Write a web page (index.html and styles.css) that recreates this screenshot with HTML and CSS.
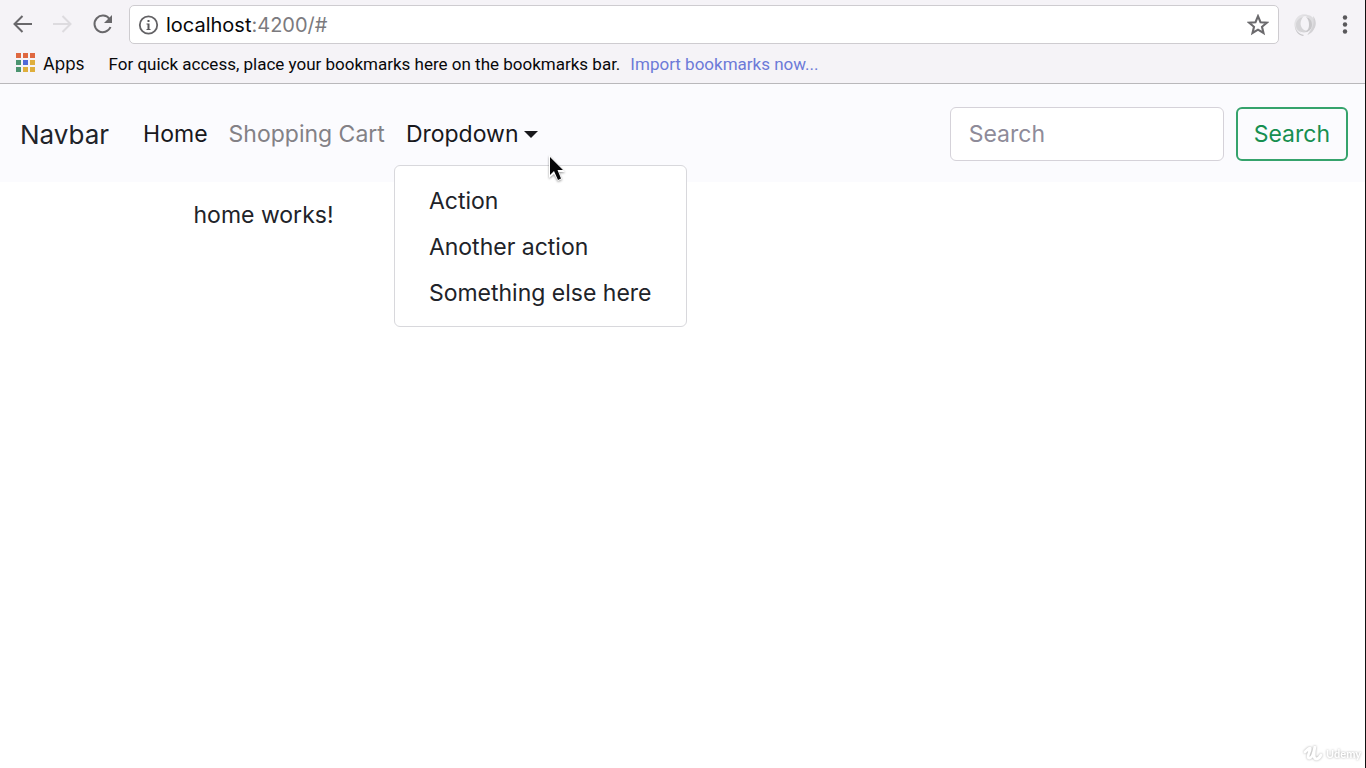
FILE: index.html
```html
<!DOCTYPE html>
<html lang="en">
<head>
<meta charset="utf-8">
<meta name="viewport" content="width=device-width, initial-scale=1">
<title>localhost:4200</title>
<link rel="stylesheet" href="styles.css">
</head>
<body>
<div class="window">
  <header class="chrome">
    <div class="toolbar">
      <button class="icon-button" type="button" aria-label="Back"><svg width="24" height="24" viewBox="0 0 24 24" fill="none" stroke="#69686b" stroke-width="2"><path d="M21 11H4M11.500 3L3.500 11l8 8"/></svg></button>
      <button class="icon-button" type="button" aria-label="Forward"><svg width="24" height="24" viewBox="0 0 24 24" fill="none" stroke="#dddbdf" stroke-width="2"><path d="M2 11h17M11.500 3l8 8-8 8"/></svg></button>
      <button class="icon-button" type="button" aria-label="Reload"><svg width="24" height="24" viewBox="0 0 24 24"><path d="M18.500 6A8.300 8.300 0 1 0 19.500 14" fill="none" stroke="#69686b" stroke-width="2"/><path d="M21 2v8h-8z" fill="#69686b"/></svg></button>
      <div class="address">
        <svg width="22" height="22" viewBox="0 0 22 22"><circle cx="10.500" cy="11" r="8.700" fill="none" stroke="#626164" stroke-width="1.800"/><path d="M9.500 6h2v2h-2zM8.500 9.500h3V15h1v1h-4v-1h1v-4.500h-1z" fill="#59585b"/></svg>
        <span class="url"><span class="host">localhost</span>:4200/#</span>
        <button class="star" type="button" aria-label="Bookmark this page"><svg width="22" height="22" viewBox="0 0 22 22"><path d="M11 2.200l2.500 6 6.300.5-4.800 4.100 1.500 6.200-5.500-3.300L5.500 19 7 12.800 2.200 8.700l6.300-.5z" fill="none" stroke="#6b6a6d" stroke-width="2.100"/></svg></button>
      </div>
      <button class="icon-button" type="button" aria-label="Extension"><svg width="24" height="24" viewBox="0 0 24 24"><path d="M8 20C2 17 0 13 2 8 4 3 9 0 15 2 10 3 6 6 6 11c0 4 0 6 2 9z" fill="#e3e2e5"/><path d="M2 13c1 5 4 8 9 9l-1 1c-5-1-8-5-8-10z" fill="#c8c7ca"/><path d="M8 3c6-3 13 0 14 6 1 5-2 10-7 12 3-4 5-8 3-12-2-5-5-7-10-6z" fill="#dedde0"/><path d="M3 12c0-4 3-7 7-8-3 4-3 8-1 11 2 3 5 3 8 2-5 5-14 2-14-5z" fill="#d5d4d7"/><path d="M13 4c4 1 6 4 6 8 0 4-3 7-7 7 3-2 4-4 4-7 0-4-1-6-3-8z" fill="#c8c7ca"/><path d="M20 3c3 3 4 9 1 13-1 3-4 5-7 6 5-5 8-11 6-19z" fill="#d3d2d5"/><ellipse cx="12" cy="11" rx="3" ry="5" fill="#f5f3f7"/></svg></button>
      <button class="icon-button menu-button" type="button" aria-label="Menu"><svg width="8" height="24" viewBox="0 0 8 24" fill="#59585b"><circle cx="4" cy="4.500" r="2.200"/><circle cx="4" cy="11.500" r="2.200"/><circle cx="4" cy="18.500" r="2.200"/></svg></button>
    </div>
    <div class="bookmarks">
      <a class="apps" href="#"><svg width="20" height="20" viewBox="0 0 20 20"><g fill="#df6840"><path d="M0 0h5v5H0zM7 0h5v5H7zM14 0h5v5h-5z"/></g><g fill="#4c9470"><path d="M0 7h5v5H0zM0 14h5v5H0z"/></g><path d="M7 7h5v5H7z" fill="#5068d8"/><path d="M14 7h5v5h-5zM7 14h5v5H7zM14 14h5v5h-5z" fill="#dfae3c"/></svg>Apps</a>
      <span class="hint">For quick access, place your bookmarks here on the bookmarks bar.</span>
      <a class="import" href="#">Import bookmarks now...</a>
    </div>
  </header>
  <nav class="navbar">
    <a class="brand" href="#">Navbar</a>
    <ul class="links">
      <li><a class="link active" href="#">Home</a></li>
      <li><a class="link" href="#">Shopping Cart</a></li>
      <li class="dropdown">
        <button class="link active toggle" type="button" aria-expanded="true">Dropdown<span class="caret"></span></button>
        <div class="menu">
          <a href="#">Action</a>
          <a href="#">Another action</a>
          <a href="#">Something else here</a>
        </div>
      </li>
    </ul>
    <form class="search">
      <input type="search" placeholder="Search" aria-label="Search">
      <button type="button">Search</button>
    </form>
  </nav>
  <main class="content"><p>home works!</p></main>
  <svg class="cursor" width="22" height="30" viewBox="0 0 22 30"><path d="M3 1v23l5-4 4 7 4-2-3-7h6z" fill="#fff"/><path d="M4 3v18l4-4 4 9 3-1.500L11.500 16H17z" fill="#050507"/></svg>
  <div class="watermark"><svg width="20" height="18" viewBox="0 0 20 18" fill="none" stroke="#fff" stroke-width="2.800" stroke-linecap="round"><path d="M2 8c3-3 6-6 5-2-2 5-3 9 0 8s4-6 5-12c-1 6-2 12 1 13 2 0 4-2 5-4"/></svg><span>Udemy</span></div>
</div>
</body>
</html>
```
FILE: styles.css
```css
* { box-sizing: border-box; }
body {
  margin: 0;
  font-family: Inter, "Noto Sans", sans-serif;
  color: #212329;
  background: #fff;
}
a { color: inherit; text-decoration: none; }
button { font: inherit; color: inherit; background: none; border: 0; padding: 0; }
svg { display: block; flex: none; }
.window {
  position: relative;
  min-height: 100vh;
  border-right: 1px solid #111;
}
.chrome {
  background: #f5f3f7;
  border-bottom: 1px solid #b9b8bb;
  color: #08080a;
}
.toolbar {
  display: flex;
  align-items: center;
  gap: 16px;
  padding: 5px 16px 0 11px;
}
.address {
  flex: 1;
  display: flex;
  align-items: center;
  gap: 6px;
  height: 39px;
  padding: 0 9px 0 8px;
  background: #fff;
  border: 1px solid #ceccd0;
  border-radius: 5px;
}
.icon-button + .address { margin: 0 -2px; }
.url { flex: 1; font-size: 20px; color: #7b7a7e; }
.host { color: #08080a; }
.menu-button { margin-left: 8px; }
.bookmarks {
  display: flex;
  align-items: center;
  height: 39px;
  padding: 0 16px;
  font-size: 17px;
}
.apps { display: flex; align-items: center; gap: 7px; }
.apps svg { margin-bottom: 1px; }
.hint { margin-left: 24px; }
.hint, .import { font-family: Roboto, sans-serif; }
.import { margin-left: 10px; color: #6c7ad8; }
.navbar {
  display: flex;
  align-items: center;
  min-height: 98px;
  padding: 2px 17px 0 20px;
  background: #fbfbfe;
  font-size: 23px;
}
.brand { font-size: 26px; }
.links {
  display: flex;
  gap: 21px;
  margin: 0 auto 0 34px;
  padding: 0;
  list-style: none;
}
.link { color: #838186; white-space: nowrap; }
.active { color: #18181c; }
.toggle { display: flex; align-items: center; gap: 5px; }
.caret {
  border: 7px solid transparent;
  border-top-color: #18181c;
  border-bottom: 0;
}
.dropdown { position: relative; }
.menu {
  position: absolute;
  top: 100%;
  left: -12px;
  margin-top: 17px;
  padding: 12px 0 10px;
  background: #fff;
  border: 1px solid #d8d8dc;
  border-radius: 6px;
  color: #212329;
}
.menu a {
  display: block;
  padding: 0 34px;
  line-height: 46px;
  white-space: nowrap;
}
.search { display: flex; gap: 12px; }
.search input, .search button {
  height: 54px;
  font: inherit;
  border-radius: 6px;
}
.search input {
  width: 274px;
  padding: 0 18px;
  background: #fff;
  border: 1px solid #d5d2d9;
}
.search input::placeholder { color: #8e8b99; opacity: 1; }
.search button { padding: 0 16px; color: #168f50; border: 2px solid #35a36c; }
.content { max-width: 1010px; margin: 0 auto; padding: 16px; }
.content p { margin: 0; font-size: 23px; line-height: 34px; }
.cursor {
  position: absolute;
  left: 546px;
  top: 154px;
  filter: drop-shadow(0 1px 1px #0006);
}
.watermark {
  position: absolute;
  right: 4px;
  bottom: 6px;
  display: flex;
  align-items: center;
  gap: 3px;
  font-family: Lato, sans-serif;
  font-size: 11px;
  font-weight: 700;
  color: #fff;
  filter: drop-shadow(0 0 1px #0005);
}
```
